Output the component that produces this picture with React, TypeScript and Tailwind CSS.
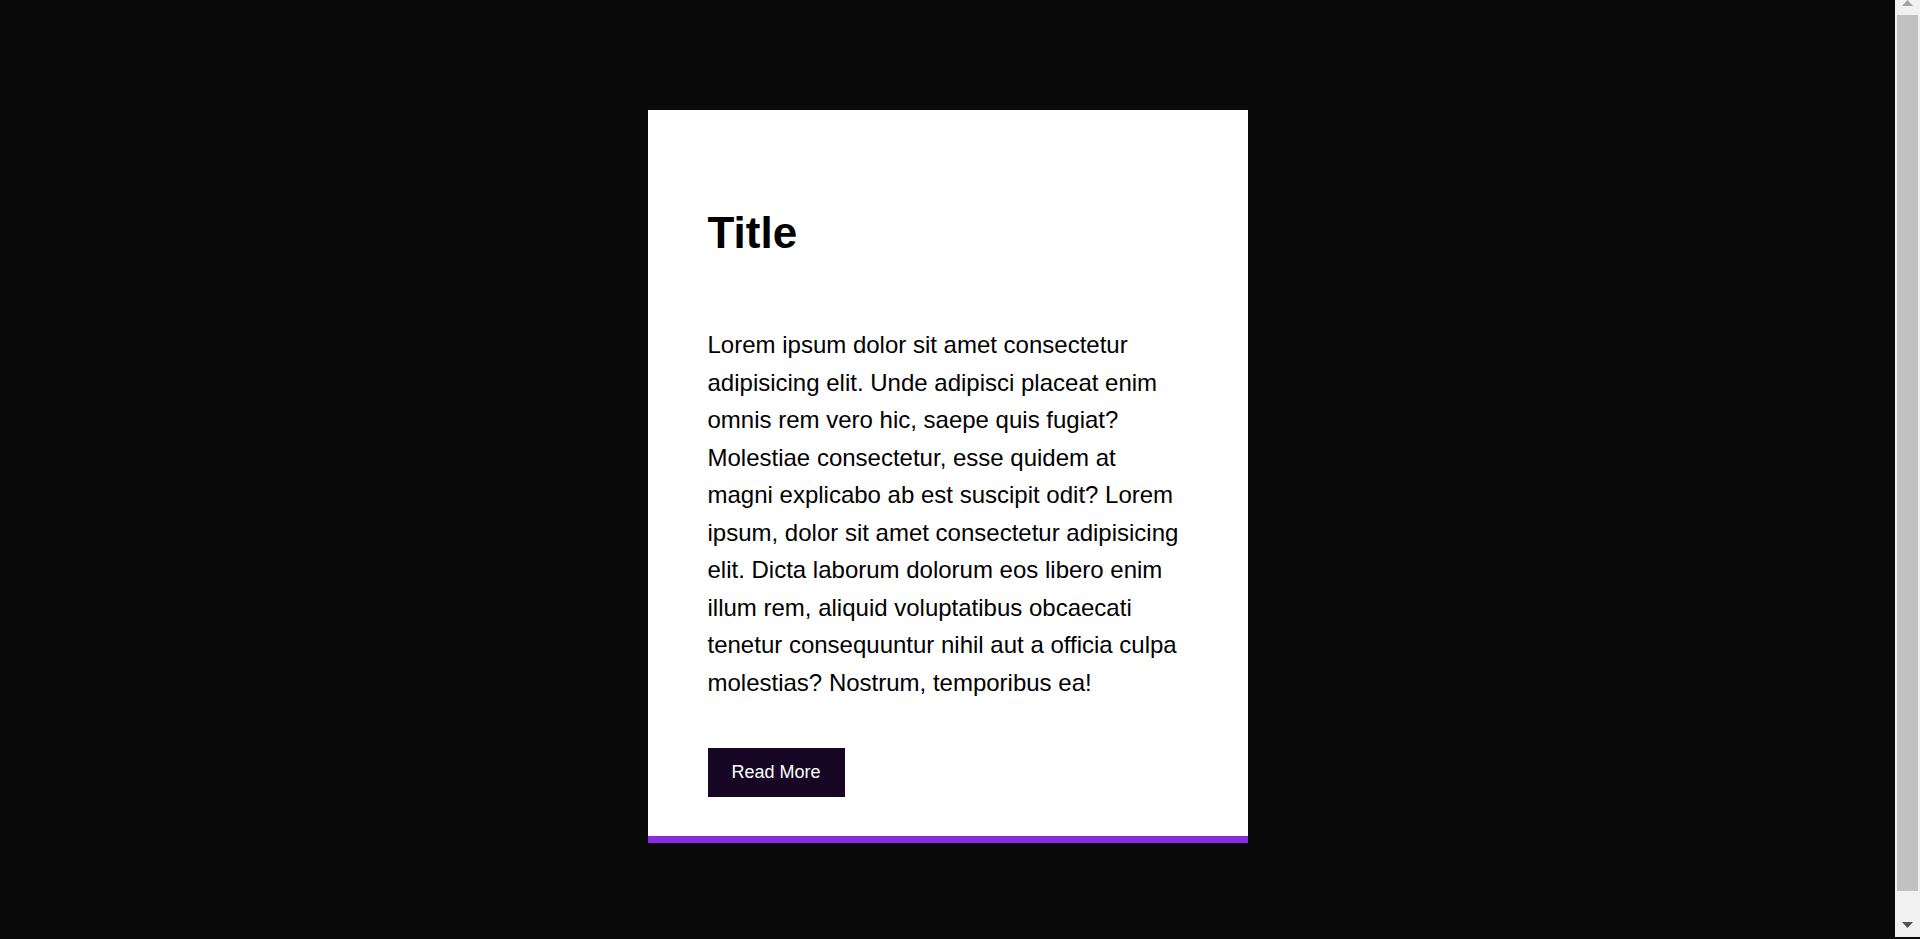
const body =
  "Lorem ipsum dolor sit amet consectetur adipisicing elit. Unde adipisci placeat enim omnis rem vero hic, saepe quis fugiat? Molestiae consectetur, esse quidem at magni explicabo ab est suscipit odit? Lorem ipsum, dolor sit amet consectetur adipisicing elit. Dicta laborum dolorum eos libero enim illum rem, aliquid voluptatibus obcaecati tenetur consequuntur nihil aut a officia culpa molestias? Nostrum, temporibus ea!";

function Card() {
  return (
    <div className="w-[600px] bg-white border-b-[7px] border-[#8a2be2] px-[60px] pt-[98px] pb-[39px]">
      <h1 className="text-[44px] leading-[50px] font-bold text-black">Title</h1>
      <p className="mt-[68px] text-[24px] leading-[37.5px] text-black">{body}</p>
      <button className="mt-[47px] h-[49px] px-[24px] bg-[#170624] text-white text-[18px] leading-[21px]">
        Read More
      </button>
    </div>
  );
}

// page scrollbar as seen in the screenshot
function ScrollBar() {
  return (
    <div className="w-[25px] h-[937px] bg-[#f1f1f1] flex flex-col items-center">
      <svg width="11" height="6" viewBox="0 0 11 6" className="shrink-0">
        <path d="M5.5 0 L11 6 L0 6 Z" fill="#a3a3a3" />
      </svg>
      <div className="mt-[9px] h-[876px] w-[21px] bg-[#c1c1c1]" />
      <svg width="11" height="6" viewBox="0 0 11 6" className="mt-[31px] shrink-0">
        <path d="M0 0 L11 0 L5.5 6 Z" fill="#505050" />
      </svg>
    </div>
  );
}

export default function App() {
  return (
    <div
      className="h-[939px] overflow-hidden bg-[#0a0a0a] flex items-start"
      style={{ fontFamily: '"Liberation Sans", Arial, sans-serif' }}
    >
      <main className="flex-1 flex justify-center pt-[110px]">
        <Card />
      </main>
      <ScrollBar />
    </div>
  );
}
